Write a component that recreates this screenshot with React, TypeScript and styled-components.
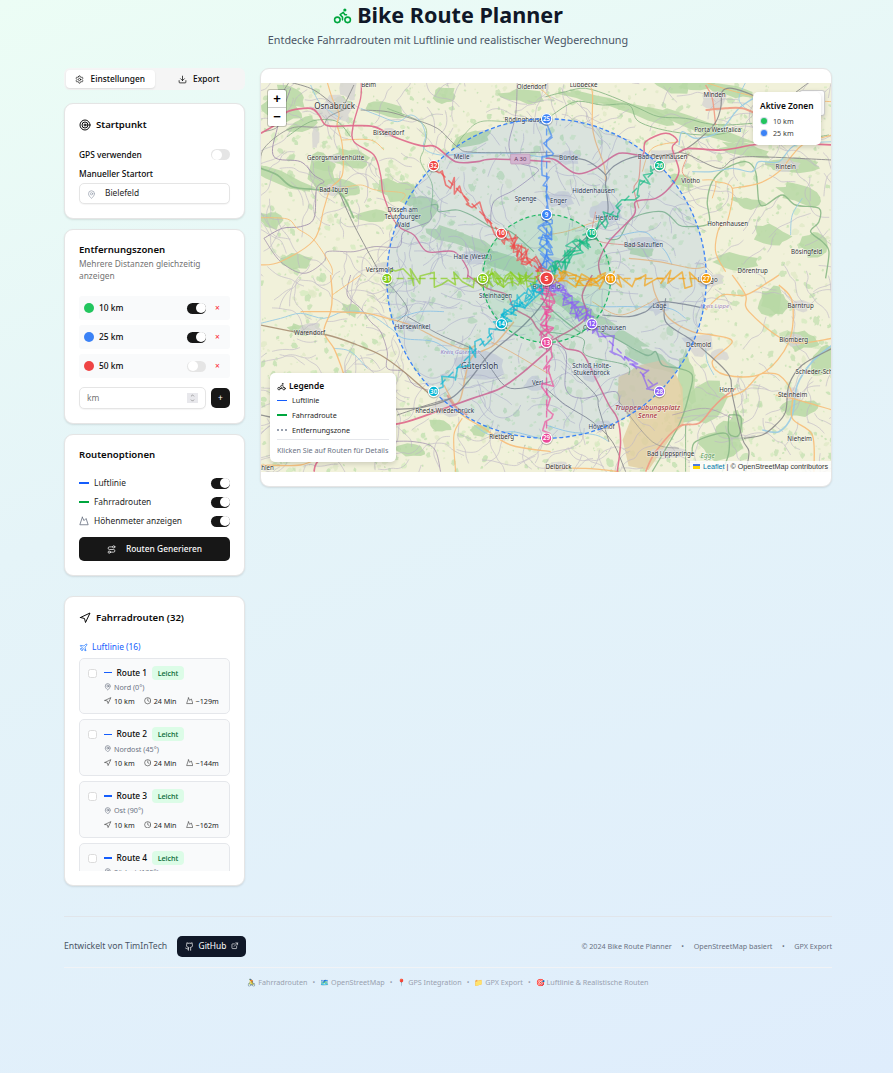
import React from 'react';
import styled, { createGlobalStyle } from 'styled-components';
import { Bike, Settings, Download, Target, MapPin, Mountain, Route, Navigation, Plane, Clock, Github, ExternalLink, ChevronUp, ChevronDown } from 'lucide-react';

const Global = createGlobalStyle`
  * { box-sizing: border-box; }
  html { min-height: 100%; }
  body {
    margin: 0; min-height: 1073px; font-family: "Noto Sans", sans-serif; font-size: 8.4px; line-height: 12px; color: #0a0a0a;
    background: linear-gradient(160deg, #ecfdf5 0%, #e5f4f8 40%, #dfedfc 100%);
  }
  svg { display: block; flex: none; }
`;

const Page = styled.div`width: 768px; margin-left: 64px; height: 1073px;`;
const Header = styled.header`height: 68px; text-align: center;`;
const Title = styled.h1`
  margin: 0; height: 30px; display: flex; align-items: center; justify-content: center; gap: 5px;
  font-size: 21.6px; line-height: 30px; font-weight: 700; color: #101828;
  svg { color: #00a63e; }
`;
const Subtitle = styled.p`margin: 1.5px 0 0; font-size: 10.8px; line-height: 15px; color: #4a5565;`;
const Main = styled.main`display: flex; gap: 15px; height: 848px;`;
const Sidebar = styled.aside`width: 181px; display: flex; flex-direction: column;`;
const Tabs = styled.div`height: 22px; display: flex; padding: 2px; background: #f5f5f5; border-radius: 6px; margin-bottom: 13px;`;
const Tab = styled.div<{ $active?: boolean }>`
  flex: 1; display: flex; align-items: center; justify-content: center; gap: 6px; border-radius: 4px; font-weight: 500;
  background: ${p => (p.$active ? '#fff' : 'transparent')}; box-shadow: ${p => (p.$active ? '0 1px 2px rgba(0,0,0,.1)' : 'none')};
`;
const Card = styled.section<{ $h: number; $gap?: number }>`
  height: ${p => p.$h}px; margin-bottom: ${p => p.$gap ?? 10}px; flex: none; background: #fff; border: 1px solid #e5e5e5;
  border-radius: 9px; padding: 14px; box-shadow: 0 1px 2px rgba(0,0,0,.1); overflow: hidden;
`;
const CardTitle = styled.h2<{ $up?: number }>`
  margin: ${p => -(p.$up ?? 0)}px 0 0; height: 14px; display: flex; align-items: center; gap: 5px; font-size: 9.6px; line-height: 14px; font-weight: 600;
`;
const CardText = styled.p`margin: 1px 0 14px; color: #737373; line-height: 12px;`;
const Row = styled.div<{ $h: number; $mt?: number }>`
  display: flex; align-items: center; justify-content: space-between; height: ${p => p.$h}px; margin-top: ${p => p.$mt ?? 0}px; font-weight: 500;
`;
const Toggle = styled.span<{ $on?: boolean }>`
  width: 19px; height: 11px; border-radius: 6px; display: flex; align-items: center; flex: none; padding: 0 .5px;
  justify-content: ${p => (p.$on ? 'flex-end' : 'flex-start')}; background: ${p => (p.$on ? '#171717' : '#e5e5e5')};
  &::after { content: ''; width: 10px; height: 10px; border-radius: 50%; background: #fff; }
`;
const Label = styled.div`margin-top: 7px; height: 12px; line-height: 12px; font-weight: 500;`;
const Input = styled.div<{ $h: number; $muted?: boolean }>`
  flex: 1; height: ${p => p.$h}px; border: 1px solid #e5e5e5; border-radius: 5px; display: flex; align-items: center; gap: 9px; font-weight: 400;
  padding: 0 7px; color: ${p => (p.$muted ? '#737373' : '#262626')}; box-shadow: 0 1px 1px rgba(0,0,0,.04);
  justify-content: ${p => (p.$muted ? 'space-between' : 'flex-start')}; background: #fff;
  svg { color: #99a1af; margin-top: 2px; }
`;
const Spin = styled.span`
  width: 11px; height: 10px; background: #e8e8ec; display: flex; flex-direction: column; align-items: center; justify-content: center;
  svg { color: #777; margin: 0; }
`;
const Zone = styled.div`
  height: 24px; margin-bottom: 5px; padding: 0 10px 0 5px; background: #f9fafb; border-radius: 3px; display: flex; align-items: center; font-weight: 500;
`;
const Dot = styled.i<{ $c: string; $s?: number }>`
  width: ${p => p.$s ?? 10}px; height: ${p => p.$s ?? 10}px; border-radius: 50%; background: ${p => p.$c}; margin-right: 5px; flex: none;
`;
const Remove = styled.b`width: 5px; margin-left: 9px; color: #fb2c36; font-size: 8.4px; font-weight: 500; text-align: center;`;
const Grow = styled.span`flex: 1;`;
const Gap = styled.span`flex: 0 0 5px;`;
const DarkButton = styled.div<{ $w?: number; $h: number }>`
  ${p => (p.$w ? `width: ${p.$w}px;` : '')} height: ${p => p.$h}px; background: #171717; color: #fafafa; border-radius: 5px; font-weight: 500;
  display: flex; align-items: center; justify-content: center; gap: 10px;
`;
const Option = styled.span`display: flex; align-items: center; gap: 5px; font-weight: 400; color: #262626; svg { color: #6a7282; }`;
const Dash = styled.i<{ $c: string; $w?: number; $h?: number }>`width: ${p => p.$w ?? 10}px; height: ${p => p.$h ?? 2}px; background: ${p => p.$c}; flex: none;`;
const GroupTitle = styled.div`margin-top: 16px; height: 13px; display: flex; align-items: center; gap: 4px; color: #155dfc; svg { color: #2b7fff; }`;
const ListView = styled.div`height: 213px; overflow: hidden; margin-top: 4px;`;
const Item = styled.div`
  height: 56.75px; margin-bottom: 5px; border: 1px solid #e5e7eb; border-radius: 5px; background: #f9fafb; display: flex; padding: 7px 8px; gap: 7px;
`;
const Check = styled.i`width: 9px; height: 9px; margin-top: 3px; border: 1px solid #dcdcdc; border-radius: 2.5px; background: #fff; flex: none;`;
const ItemBody = styled.div`flex: 1;`;
const ItemHead = styled.div`height: 14px; display: flex; align-items: center; gap: 4.5px; font-weight: 500;`;
const Badge = styled.span`height: 14px; padding: 0 6px; line-height: 14px; border-radius: 4px; background: #dcfce7; color: #016630; font-size: 7.2px; font-weight: 500;`;
const Place = styled.div`height: 14.5px; display: flex; align-items: center; gap: 2.5px; font-size: 7.2px; color: #6a7282;`;
const Stats = styled.div`height: 14px; display: flex; align-items: center; gap: 9px; font-size: 7.2px; color: #262626; white-space: nowrap;`;
const Stat = styled.span`display: flex; align-items: center; gap: 2.5px; svg { color: #404040; }`;

const MapCard = styled.section`
  flex: 1; margin-right: 0.5px; height: 419px; background: #fff; border: 1px solid #e5e5e5; border-radius: 9px; padding: 14px 0; box-shadow: 0 1px 2px rgba(0,0,0,.1);
`;
const MapFrame = styled.div`position: relative; height: 389px; overflow: hidden;`;
const Overlay = styled.div`position: absolute; background: #fff; border-radius: 5px; box-shadow: 0 2px 5px rgba(0,0,0,.15);`;
const ZoomBox = styled(Overlay)`left: 7px; top: 7px; width: 18px; height: 36px; border-radius: 2px; box-shadow: 0 0 0 1px rgba(0,0,0,.2); z-index: 2;`;
const ZoomKey = styled.div`height: 18px; font: bold 13px/18px "Liberation Sans", sans-serif; color: #000; text-align: center; border-bottom: 1px solid #ccc; &:last-child { border: 0; }`;
const Layers = styled(Overlay)`right: 6px; top: 7px; width: 26px; height: 26px; border-radius: 3px; border: 1px solid rgba(0,0,0,.2);`;
const Zones = styled(Overlay)`right: 10px; top: 9px; width: 68px; height: 53px; padding: 7px;`;
const ZoneLine = styled.div`height: 12px; display: flex; align-items: center; font-size: 7.2px; color: #404040; i { box-shadow: 0 0 0 1px rgba(200,210,230,.8); margin: 0 6px 0 1px; }`;
const Legend = styled(Overlay)`left: 8.5px; top: 290px; width: 126.5px; height: 89px; padding: 6px 7px 6px 7.5px;`;
const OverlayTitle = styled.div<{ $mb?: number }>`height: 14px; margin-bottom: ${p => p.$mb ?? 0}px; display: flex; align-items: center; gap: 3px; font-weight: 600; white-space: nowrap;`;
const LegendLine = styled.div`height: 14.7px; display: flex; align-items: center; gap: 5px; font-size: 7.2px; color: #262626;`;
const Dots = styled.i`width: 10px; border-top: 2px dotted #99a1af;`;
const Hint = styled.div`margin-top: 2px; border-top: 1px solid #e5e7eb; padding-top: 4px; font-size: 7.2px; color: #6a7282; white-space: nowrap;`;
const Attribution = styled.div`
  position: absolute; right: 0; bottom: 0; height: 11px; padding: 0 3px; background: rgba(255,255,255,.8); display: flex; align-items: center;
  gap: 2px; font: 7.2px/11px "Liberation Sans", sans-serif; color: #333; white-space: nowrap; a { color: #0078a8; }
`;
const Flag = styled.i`width: 7px; height: 5px; margin-right: 1px; background: linear-gradient(#4c7be1 50%, #ffd500 50%);`;

const Footer = styled.footer`border-top: 1px solid #e1e5ea;`;
const FooterTop = styled.div`height: 51px; padding-top: 8px; border-bottom: 1px solid #f1f3f6; display: flex; align-items: center; justify-content: space-between; color: #4a5565;`;
const FooterSide = styled.div<{ $gap: number; $small?: boolean }>`display: flex; align-items: center; gap: ${p => p.$gap}px; font-size: ${p => (p.$small ? 7.2 : 8.7)}px; color: ${p => (p.$small ? '#6a7282' : '#4a5565')};`;
const GithubButton = styled.div`height: 21px; width: 69px; background: #101828; color: #fff; border-radius: 5px; display: flex; align-items: center; justify-content: center; gap: 5px; font-size: 8.4px; font-weight: 400;`;
const FooterTags = styled.div`margin-top: 7px; height: 14px; display: flex; justify-content: center; align-items: center; gap: 5px; font-size: 7.2px; color: #99a1af; white-space: nowrap;`;

const rng = (seed: number) => () => {
  seed = (seed * 1664525 + 1013904223) >>> 0;
  return seed / 4294967296;
};

type Pt = [number, number];
const smooth = (s: string) => {
  const n = s.trim().split(/[\s,]+/).map(Number);
  const p: Pt[] = [];
  for (let i = 0; i < n.length; i += 2) p.push([n[i], n[i + 1]]);
  let d = `M${p[0][0]} ${p[0][1]}`;
  for (let i = 0; i < p.length - 1; i++) {
    const a = p[i - 1] || p[i], b = p[i], c = p[i + 1], e = p[i + 2] || c;
    d += `C${b[0] + (c[0] - a[0]) / 6} ${b[1] + (c[1] - a[1]) / 6} ${c[0] - (e[0] - b[0]) / 6} ${c[1] - (e[1] - b[1]) / 6} ${c[0]} ${c[1]}`;
  }
  return d;
};

const blob = (x: number, y: number, rx: number, ry: number, seed: number, rot = 0) => {
  const r = rng(seed);
  const n = 14;
  const pts: string[] = [];
  for (let i = 0; i < n; i++) {
    const t = (i / n) * Math.PI * 2, k = 0.7 + r() * 0.5;
    const u = Math.cos(t) * rx * k, v = Math.sin(t) * ry * k;
    pts.push(`${(x + u * Math.cos(rot) - v * Math.sin(rot)).toFixed(1)} ${(y + u * Math.sin(rot) + v * Math.cos(rot)).toFixed(1)}`);
  }
  return `M${pts.join('L')}Z`;
};

const fields = (() => {
  const r = rng(77);
  const out: { d: string; c: string }[] = [];
  for (let i = 0; i < 2300; i++) {
    const x = 260 + r() * 572, y = 83 + r() * 389, s = 0.6 + r() * r() * 3.2;
    out.push({ d: blob(x, y, s * 1.4, s, i + 5, r() * 3), c: ['#bfdfae', '#d3e9bd', '#dfe8c6', '#c3dfb0'][i % 4] });
  }
  return out;
})();

const lanes = (() => {
  const r = rng(4242);
  const out: string[] = [];
  for (let i = 0; i < 460; i++) {
    let x = 255 + r() * 580, y = 80 + r() * 395, a = r() * 6.28;
    const pts = [x.toFixed(1), y.toFixed(1)];
    const n = 3 + Math.floor(r() * 6);
    for (let k = 0; k < n; k++) {
      a += (r() - 0.5) * 1.2;
      x += Math.cos(a) * 7; y += Math.sin(a) * 7;
      pts.push(x.toFixed(1), y.toFixed(1));
    }
    out.push(smooth(pts.join(' ')));
  }
  return out;
})();

const woods: [number, number, number, number, number][] = [
  [350, 158, 20, 9, .2], [325, 166, 12, 7, .1], [320, 170, 14, 20, 0], [285, 180, 32, 7, .35], [340, 188, 24, 8, .3], [398, 192, 22, 12, .3],
  [372, 216, 16, 7, 0], [290, 96, 16, 10, .4], [283, 110, 22, 10, .2], [340, 105, 12, 8, 0], [385, 110, 20, 7, .2], [303, 124, 16, 7, -.3],
  [424, 210, 14, 16, .3], [462, 240, 36, 8, .3], [502, 262, 38, 8, .35], [472, 139, 22, 7, -.3], [523, 96, 22, 7, .1], [445, 95, 12, 9, .1],
  [590, 98, 30, 5, .2], [640, 112, 40, 6, .3], [700, 126, 55, 6, .35], [745, 150, 25, 7, .2], [668, 84, 24, 9, .3], [748, 203, 16, 6, .2],
  [790, 165, 30, 7, 0], [800, 195, 25, 10, .3], [770, 235, 20, 10, .3], [735, 262, 24, 9, 0], [815, 245, 14, 18, 0], [680, 180, 14, 6, .3],
  [640, 250, 14, 7, .2], [570, 305, 34, 9, .5], [610, 330, 40, 8, .5], [650, 360, 32, 8, .4], [686, 378, 10, 28, -.1], [700, 405, 28, 18, -.6],
  [726, 430, 14, 10, 0], [722, 446, 24, 14, .1], [735, 426, 8, 14, 0], [775, 302, 16, 10, .4], [800, 340, 18, 10, 0], [822, 360, 12, 18, .4],
  [800, 408, 20, 9, 0], [770, 300, 12, 14, .4], [295, 262, 16, 8, 0], [300, 330, 12, 6, .2], [440, 425, 12, 6, .2], [480, 430, 10, 6, 0],
  [350, 310, 10, 6, .4], [410, 450, 16, 6, .1], [695, 85, 20, 5, 0], [730, 90, 25, 6, .2], [783, 120, 25, 12, .2], [270, 220, 12, 8, .3],
];
const towns: [number, number, number, number][] = [
  [334, 110, 24, 16], [348, 88, 10, 16], [548, 276, 28, 22], [480, 366, 30, 18], [605, 212, 20, 14], [662, 157, 20, 9], [714, 100, 15, 12],
  [645, 243, 22, 9], [698, 344, 19, 14], [710, 280, 16, 9], [445, 408, 17, 10], [568, 158, 16, 8], [330, 190, 10, 7], [389, 133, 9, 6],
  [462, 156, 11, 5], [310, 329, 14, 8], [560, 199, 15, 11], [605, 330, 18, 8], [590, 374, 14, 10], [658, 307, 14, 9], [785, 166, 17, 7],
  [720, 355, 10, 7], [793, 340, 12, 7], [792, 394, 11, 8], [670, 452, 22, 7], [602, 426, 10, 7], [558, 466, 14, 6], [502, 435, 9, 6],
  [380, 267, 10, 7], [410, 326, 10, 6], [315, 138, 5, 13], [534, 383, 13, 8], [472, 258, 13, 8], [800, 306, 12, 7], [336, 158, 10, 5],
];

type Roads = { x: number; y: number; lines: [string, string, number][] };
const M = '#df6789', T = '#ef9a82', O = '#f7bd78', K = '#8b8b8b', B = '#99cbe3', G = '#8ab886', P = '#a290ad', W = '#a98e72';
const roads: Roads[] = [
  { x: 260, y: 65, lines: [
    [G, '0 310 50 330 95 365 180 375 240 385 280 460', 5], [G, '380 130 490 180 490 250 480 290 515 360 510 440', 2.5],
    [G, '510 420 530 420 535 440 590 435 640 455 700 490 750 500 820 560', 3.5], [G, '590 240 610 210 660 170 760 170 870 160', 2.5],
    [G, '80 215 130 180 170 165 230 170 270 215', 3], [P, '10 520 65 490 120 485 160 460 168 370 190 350 160 330 120 290 40 275 50 190 90 70', 3],
    [P, '10 520 60 590 130 625 190 590 200 560 280 560 340 545 415 545 430 500 505 470 510 440', 2.5],
    [P, '770 52 765 150 745 240 770 290 830 310 820 330 760 375 700 410 690 470', 2.5],
    [B, '300 130 350 150 410 170 450 150 480 170 495 210 490 250 540 270 620 265 750 265 870 280', 3],
    [B, '150 60 175 110 210 140 240 160', 3],
    [O, '200 52 215 100 235 145 230 180 245 240 245 330 210 370 190 430 160 525 60 590 0 600', 3.5], [O, '0 458 80 462 110 490 160 525 210 600 215 630', 3],
    [O, '245 225 330 225 370 255', 3], [O, '240 370 300 360 345 375 430 385 420 410', 2.5], [O, '810 52 850 80 870 100', 3],
    [K, '85 52 60 100 55 180 10 200', 2.5], [K, '300 135 380 140 450 160 530 190 590 245 640 262 870 262', 2.7],
    [K, '90 52 160 75 235 130 250 120 280 60', 3], [K, '0 310 10 250 90 190 180 185 205 155 260 130', 2.5], [K, '235 380 280 480 350 610', 3],
    [M, '0 205 50 175 80 140 150 130 175 150 200 182 275 182 340 185 400 215 480 242 525 245 585 290 650 290 700 282 870 290', 5],
    [M, '302 52 300 100 278 180 280 230 340 270 360 330 370 395 410 480 460 510 500 560 580 560 620 610 620 640', 4],
  ] },
  { x: 545, y: 65, lines: [
    [G, '0 95 60 80 120 70 200 95 280 130 340 155 420 160 480 175 540 180 620 175', 3], [G, '20 150 90 110 170 120 250 120 280 170 380 200 500 210 590 190', 3],
    [G, '430 485 490 475 485 410 500 350 540 310 600 290 630 320 640 410 660 420 710 390 750 420 820 430 820 470 795 500 830 530 850 560 840 640', 4],
    [G, '180 520 220 520 260 460 350 440 400 480 430 485', 3.5], [G, '780 190 800 215 850 210', 3],
    [B, '400 240 410 200 450 220 520 200 580 130 640 90', 4], [B, '440 320 500 320 560 310 620 320 640 290 700 290 750 240 860 230', 3.5],
    [B, '600 52 580 100 600 130 640 150', 3], [B, '770 400 740 450 735 510', 3], [B, '190 520 290 500 330 530 360 560 380 600', 3],
    [O, '120 52 140 80 140 180 150 230 175 300 180 350', 3.5], [O, '500 400 510 350 470 345', 3], [O, '510 350 560 370 545 470 520 490 510 560 540 620', 3.5],
    [O, '560 370 640 355 700 320 770 240 860 210', 3.5], [O, '480 52 550 75 610 90 660 100 860 110', 3], [O, '0 510 60 500 120 480 180 460', 3],
    [O, '250 580 340 590 440 610 480 605', 3.5], [O, '290 320 320 250 400 230', 3],
    [T, '480 135 540 130 590 130 640 150', 6], [T, '480 60 500 100 510 180', 4], [T, '285 270 280 340 265 370 280 430', 3.5], [T, '150 440 145 520 240 540 300 540', 3],
    [T, '430 265 410 320 440 350', 3], [K, '740 90 790 52', 3],
    [K, '0 270 90 280 130 290 180 330 180 360 185 450 130 510 30 600', 3.5], [K, '180 330 210 300 270 275 400 262 500 185 525 130 530 80 560 70 620 90 700 130', 3.5],
    [K, '400 262 430 270 520 310 560 285 620 275 860 285', 3],
    [M, '0 280 30 285 90 325 150 310 220 265 290 270 300 230 360 205 395 225 380 250 400 320 370 370 330 400 270 410 265 450 190 530 160 590 165 630', 4.5],
    [M, '400 262 430 250 530 255 620 240 700 230 770 235 860 240', 5],
  ] },
  { x: 260, y: 275, lines: [
    [B, '0 145 60 130 120 115 190 130 250 110 320 115 390 160 430 190 520 200 580 240', 3], [B, '410 130 480 110 550 110', 3], [B, '220 220 270 230 320 280', 3],
    [B, '640 450 690 480 750 470 800 480 870 500', 3], [P, '270 0 260 60 300 100 330 140 360 170 380 230 380 280 430 290 460 330 520 350', 2.5],
    [P, '380 500 460 500 520 520 540 590', 2.5], [O, '210 0 215 60 210 110 190 170 220 220 240 270 250 300', 4],
    [O, '300 0 215 60', 3], [O, '120 110 210 110 320 115 380 130 450 150 530 190 600 220 640 215 640 210', 4], [O, '640 240 600 220', 3],
    [O, '0 570 120 570 200 540 240 560', 4], [O, '550 330 580 385 605 420 670 460 750 510 870 530', 4], [O, '605 430 580 480 585 590', 3.5],
    [O, '760 140 700 210 640 240 620 280 600 370 580 390', 4.5], [O, '690 200 750 230 870 300', 3],
    [T, '560 360 580 390 620 420', 6], [W, '0 150 100 170 200 180 290 210 360 240 430 290 510 360', 4],
    [K, '0 420 80 430 140 390 300 400 460 400 570 370 630 310 690 235 790 150 850 80 870 30', 4], [K, '570 370 500 390 410 420', 3],
    [K, '380 20 440 100 410 140', 2.5], [K, '440 125 540 180 650 230 690 280 750 340 870 320', 3],
    [M, '160 590 180 550 300 470 440 440 580 390 650 365 720 340 790 290 870 220', 5], [M, '620 0 680 40 740 60 760 100 810 130 830 160 870 200', 4.5],
  ] },
  { x: 545, y: 275, lines: [
    [G, '0 90 100 170 120 160 190 180 300 240 330 230 350 270 400 280 440 300 430 360 400 450 320 590', 4], [G, '420 450 420 590', 3],
    [G, '550 420 585 425 580 480 550 475 550 420', 4], [G, '440 540 450 500 540 475 550 530 530 590', 4], [G, '0 170 110 190 120 240 240 270 250 300', 3],
    [B, '480 220 485 260 505 300', 3], [B, '860 210 800 260 755 330 740 420 700 470 650 465', 5], [B, '0 40 130 90 260 95 370 100 420 130', 3], [B, '0 450 70 470 150 480 190 500', 3],
    [P, '0 200 60 230 60 340 110 370 210 350 220 400', 2.5], [P, '380 420 480 400 560 430', 2],
    [O, '320 20 330 60 370 130 440 170 500 180 560 200 500 260 540 300 650 295 730 200 740 80 700 30', 4],
    [O, '650 295 700 300 740 355 740 430 800 480 805 590', 4], [O, '480 105 530 60 600 60 670 20 700 0', 4], [O, '560 0 600 60 610 110 730 200 860 190', 4],
    [O, '530 370 590 350 630 310 640 300', 4], [O, '0 580 120 580 220 590', 4], [O, '690 360 740 370 860 405', 3.5], [O, '140 80 220 120 300 90 330 70', 3],
    [T, '300 590 330 530 400 455 460 445 500 400 530 370 570 340', 5], [K, '170 120 250 125 300 110 350 80 480 100', 3.5],
    [K, '360 70 360 140 430 190 480 230 550 300 560 360 590 490 610 530 600 590', 3.5], [K, '860 220 770 270 730 330 720 410 690 450 650 480 595 490', 3.5],
    [K, '0 340 60 390 140 440 200 500 240 590', 3], [K, '80 290 150 360 160 400 190 500', 3], [K, '220 380 320 500 400 520', 2],
    [M, '140 0 110 60 120 130 30 190 0 200', 4.5], [M, '30 190 60 220 110 235 150 310 190 390 215 430 225 500 215 590', 4.5],
  ] },
];

const labels: [string, number, number, number?][] = [
  ['Osnabrück', 334, 109, 8], ['Belm', 368, 87], ['Oldendorf', 531, 89], ['Lübbecke', 583, 87], ['Minden', 714, 97], ['Bissendorf', 388, 135],
  ['Georgsmarienhütte', 335, 160], ['Melle', 461, 159], ['Bad Iburg', 333, 192], ['Rödinghausen', 525, 122], ['Bünde', 568, 160], ['Porta Westfalica', 717, 132],
  ['Bad Oeynhausen', 662, 159], ['Rinteln', 785, 169], ['Vlotho', 690, 183], ['Hiddenhausen', 593, 193], ['Spenge', 525, 201], ['Enger', 558, 203],
  ['Herford', 606, 220], ['Hohenhausen', 727, 226], ['Bad Salzuflen', 643, 247], ['Bösingfeld', 806, 254], ['Dörentrup', 752, 273], ['Versmold', 379, 272],
  ['Dissen am', 402, 212], ['Teutoburger', 402, 219], ['Wald', 402, 227], ['Halle (Westf.)', 472, 259], ['Steinhagen', 495, 298], ['Bielefeld', 546, 289, 7],
  ['Harsewinkel', 412, 329], ['Warendorf', 309, 335], ['Gütersloh', 479, 369, 8], ['Verl', 537, 385], ['Rheda-Wiedenbrück', 444, 413], ['Rietberg', 501, 439],
  ['Delbrück', 558, 469], ['Lage', 659, 308], ['Lemgo', 707, 282], ['Oerlinghausen', 604, 330], ['Detmold', 698, 347], ['Schloß Holte-', 591, 368],
  ['Stukenbrock', 591, 375], ['Hövelhof', 601, 429], ['Bad Lippspringe', 670, 456], ['Horn', 726, 392], ['Steinheim', 792, 397], ['Blomberg', 793, 342],
  ['Barntrup', 800, 308], ['Schieder-Schwalenberg', 829, 374], ['Nieheim', 799, 441], ['Ahlen', 265, 470],
];

const COLORS = ['#3b82f6', '#10b981', '#f59e0b', '#8b5cf6', '#ec4899', '#06b6d4', '#84cc16', '#ef4444'];
const CX = 546, CY = 278.5;
const trail = (k: number, len: number, start: number, steps: number, amp: number, seed: number) => {
  const r = rng(seed * 977 + 31);
  const a = (k * Math.PI) / 4;
  const pts: string[] = [];
  for (let i = 0; i <= steps; i++) {
    const end = i === steps;
    const t = start + ((len - start) * i) / steps + (end ? 0 : (r() - 0.5) * 13);
    const w = end ? 0 : (r() - 0.5) * amp;
    pts.push(`${(CX + Math.sin(a) * t + Math.cos(a) * w).toFixed(1)},${(CY - Math.cos(a) * t + Math.sin(a) * w).toFixed(1)}`);
  }
  return pts.join(' ');
};

const CityMap = () => (
  <svg width="570" height="389" viewBox="260.4 83 570 389" fontFamily="Noto Sans, sans-serif">
    <rect x="258" y="83" width="576" height="389" fill="#f1f1da" />
    {fields.map((f, i) => <path key={i} d={f.d} fill={f.c} opacity=".75" />)}
    {woods.map((w, i) => <path key={i} d={blob(w[0], w[1], w[2], w[3], i * 7 + 3, w[4])} fill="#b7d8a4" opacity=".85" />)}
    <path d="M618 377L640 365L662 360L673 370L682 388L683 425L672 435L648 470L628 466L622 440L630 420L617 400Z" fill="#e2cfa2" opacity=".85" />
    {towns.map((t, i) => <path key={i} d={blob(t[0], t[1], t[2] * 0.85, t[3] * 0.85, i * 13 + 9)} fill="#d6d4d2" opacity=".8" />)}
    <g fill="none" stroke="#bdb6c6" strokeWidth=".7" opacity=".85">{lanes.map((d, i) => <path key={i} d={d} />)}</g>
    {roads.map((q, i) => (
      <g key={i} transform={`translate(${q.x} ${q.y}) scale(.33333)`} fill="none" strokeLinejoin="round">
        {q.lines.map((l, k) => <path key={k} d={smooth(l[1])} stroke={l[0]} strokeWidth={l[2]} opacity=".9" />)}
      </g>
    ))}
    <rect x="510" y="154" width="19.500" height="10" rx="1" fill="#e9bccb" stroke="#cf92aa" strokeWidth=".6" />
    <text x="519.700" y="161.300" fontSize="6" textAnchor="middle" fill="#6b2944">A 30</text>
    <g textAnchor="middle" fill="#333" stroke="#fff" strokeOpacity=".6" strokeWidth="1.2" paintOrder="stroke">
      {labels.map((l, i) => <text key={i} x={l[1]} y={l[2] + 0.4} fontSize={l[3] ?? 6.2}>{l[0]}</text>)}
      <g fill="#a9363c" fontStyle="italic" fontWeight="500" fontSize="7"><text x="647" y="410">Truppenübungsplatz</text><text x="647" y="418">Senne</text></g>
      <g fill="#a184b5" fontStyle="italic" fontSize="6"><text x="460" y="354">Kreis Gütersloh</text><text x="714" y="307.500">Kreis Lippe</text></g>
      <text x="707" y="458" fill="#5a9b57" fontStyle="italic" fontSize="6.500">Egge</text>
    </g>
    <circle cx={CX} cy={CY} r="159.700" fill="#3b82f6" fillOpacity=".12" stroke="#3b82f6" strokeWidth="1.300" strokeDasharray="4 2.500" />
    <circle cx={CX} cy={CY} r="64" fill="#22c55e" fillOpacity=".1" stroke="#22b866" strokeWidth="1.200" strokeDasharray="4 2.500" />
    <g fill="none" strokeLinejoin="round">
      {COLORS.map((c, k) => (
        <g key={c} stroke={c}>
          <polyline points={trail(k, 64, 3, 24, 17, k + 1)} strokeWidth="1.500" opacity=".65" />
          <polyline points={trail(k, 64, 6, 14, 20, k + 51)} strokeWidth="1.400" opacity=".6" />
          <polyline points={trail(k, 159.7, 14, 30, k === 2 || k === 6 ? 21 : 15, k + 21)} strokeWidth="1.600" opacity=".65" />
          <line x1={CX} y1={CY} x2={CX + Math.sin(k * Math.PI / 4) * 159.7} y2={CY - Math.cos(k * Math.PI / 4) * 159.7} strokeWidth="1.400" strokeDasharray="7 4" opacity=".7" />
        </g>
      ))}
    </g>
    {COLORS.flatMap((c, k) => [64, 159.7].map((r, j) => {
      const x = CX + Math.sin(k * Math.PI / 4) * r, y = CY - Math.cos(k * Math.PI / 4) * r;
      return (
        <g key={`${k}-${j}`}>
          <circle cx={x} cy={y + 0.7} r="6.300" fill="#000" opacity=".22" />
          <circle cx={x} cy={y} r="5.200" fill={c} stroke="#fff" strokeWidth="1.200" />
          <text x={x} y={y + 2.2} fill="#fff" fontSize="6.200" fontWeight="600" textAnchor="middle">{(j ? 25 : 9) + k}</text>
        </g>
      );
    }))}
    <circle cx={CX} cy={CY + 0.7} r="7.700" fill="#000" opacity=".25" />
    <circle cx={CX} cy={CY} r="6.700" fill="#ef4444" stroke="#fff" strokeWidth="1.200" />
    <text x={CX} y={CY + 2.6} fill="#fff" fontSize="7.200" fontWeight="700" textAnchor="middle">S</text>
  </svg>
);

const zones: [string, string, boolean][] = [['10 km', '#22c55e', true], ['25 km', '#3b82f6', true], ['50 km', '#ef4444', false]];
const routes: [string, string, string][] = [['Route 1', 'Nord (0°)', '~129m'], ['Route 2', 'Nordost (45°)', '~144m'], ['Route 3', 'Ost (90°)', '~162m'], ['Route 4', 'Südost (135°)', '~138m']];

export default function App() {
  return (
    <>
      <Global />
      <Page>
        <Header>
          <Title><Bike size={19} />Bike Route Planner</Title>
          <Subtitle>Entdecke Fahrradrouten mit Luftlinie und realistischer Wegberechnung</Subtitle>
        </Header>
        <Main>
          <Sidebar>
            <Tabs>
              <Tab $active><Settings size={9} strokeWidth={1.8} />Einstellungen</Tab>
              <Tab><Download size={9} />Export</Tab>
            </Tabs>
            <Card $h={116}>
              <CardTitle><Target size={12} />Startpunkt</CardTitle>
              <Row $h={12} $mt={16.500}><span>GPS verwenden</span><Toggle /></Row>
              <Label>Manueller Startort</Label>
              <Row $h={21} $mt={3}><Input $h={21}><MapPin size={9} />Bielefeld</Input></Row>
            </Card>
            <Card $h={194.500}>
              <CardTitle $up={1}>Entfernungszonen</CardTitle>
              <CardText>Mehrere Distanzen gleichzeitig anzeigen</CardText>
              {zones.map(z => (
                <Zone key={z[0]}><Dot $c={z[1]} />{z[0]}<Grow /><Toggle $on={z[2]} /><Remove>×</Remove></Zone>
              ))}
              <Row $h={22} $mt={8.500}>
                <Input $h={22} $muted>km<Spin><ChevronUp size={5} strokeWidth={3} /><ChevronDown size={5} strokeWidth={3} /></Spin></Input>
                <Gap />
                <DarkButton $w={19} $h={20}>+</DarkButton>
              </Row>
            </Card>
            <Card $h={142} $gap={20}>
              <CardTitle $up={0.5}>Routenoptionen</CardTitle>
              <Row $h={19} $mt={11.500}><Option><Dash $c="#155dfc" />Luftlinie</Option><Toggle $on /></Row>
              <Row $h={19}><Option><Dash $c="#00a63e" />Fahrradrouten</Option><Toggle $on /></Row>
              <Row $h={19}><Option><Mountain size={10} />Höhenmeter anzeigen</Option><Toggle $on /></Row>
              <Row $h={24} $mt={6.500}><DarkButton $w={151} $h={24}><Route size={9} />Routen Generieren</DarkButton></Row>
            </Card>
            <Card $h={290.500} $gap={0}>
              <CardTitle><Navigation size={12} />Fahrradrouten (32)</CardTitle>
              <GroupTitle><Plane size={9} />Luftlinie (16)</GroupTitle>
              <ListView>
                {routes.map(r => (
                  <Item key={r[0]}>
                    <Check />
                    <ItemBody>
                      <ItemHead><Dash $c="#155dfc" $w={8} $h={1.5} />{r[0]}<Badge>Leicht</Badge></ItemHead>
                      <Place><MapPin size={7.5} />{r[1]}</Place>
                      <Stats>
                        <Stat><Navigation size={7.5} />10 km</Stat><Stat><Clock size={7.5} />24 Min</Stat><Stat><Mountain size={7.5} />{r[2]}</Stat>
                      </Stats>
                    </ItemBody>
                  </Item>
                ))}
              </ListView>
            </Card>
          </Sidebar>
          <MapCard>
            <MapFrame>
              <CityMap />
              <ZoomBox><ZoomKey>+</ZoomKey><ZoomKey>−</ZoomKey></ZoomBox>
              <Layers />
              <Zones>
                <OverlayTitle $mb={2}>Aktive Zonen</OverlayTitle>
                <ZoneLine><Dot $c="#22c55e" $s={6} />10 km</ZoneLine>
                <ZoneLine><Dot $c="#3b82f6" $s={6} />25 km</ZoneLine>
              </Zones>
              <Legend>
                <OverlayTitle><Bike size={9} />Legende</OverlayTitle>
                <LegendLine><Dash $c="#155dfc" $h={1} />Luftlinie</LegendLine>
                <LegendLine><Dash $c="#00a63e" />Fahrradroute</LegendLine>
                <LegendLine><Dots />Entfernungszone</LegendLine>
                <Hint>Klicken Sie auf Routen für Details</Hint>
              </Legend>
              <Attribution><Flag /><a>Leaflet</a> | © OpenStreetMap contributors</Attribution>
            </MapFrame>
          </MapCard>
        </Main>
        <Footer>
          <FooterTop>
            <FooterSide $gap={10}>Entwickelt von TimInTech<GithubButton><Github size={9} />GitHub<ExternalLink size={7.5} /></GithubButton></FooterSide>
            <FooterSide $gap={9.6} $small><span>© 2024 Bike Route Planner</span><span>•</span><span>OpenStreetMap basiert</span><span>•</span><span>GPX Export</span></FooterSide>
          </FooterTop>
          <FooterTags>
            <span>🚴 Fahrradrouten</span><span>•</span><span>🗺️ OpenStreetMap</span><span>•</span><span>📍 GPS Integration</span><span>•</span><span>📁 GPX Export</span><span>•</span><span>🎯 Luftlinie &amp; Realistische Routen</span>
          </FooterTags>
        </Footer>
      </Page>
    </>
  );
}
